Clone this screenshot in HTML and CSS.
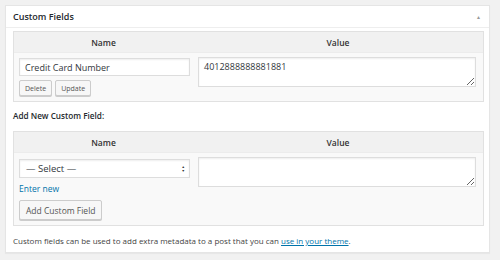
FILE: index.html
```html
<!DOCTYPE html>
<html lang="en">
<head>
    <meta charset="UTF-8">
    <title>Custom Fields</title>
    <link rel="stylesheet" href="styles.css">
</head>
<body>
    <div class="postbox">
        <div class="postbox-head">
            <h2>Custom Fields</h2>
            <span class="toggle">&#9650;</span>
        </div>
        <div class="inside">
            <table class="meta-table">
                <thead>
                    <tr>
                        <th class="col-name">Name</th>
                        <th>Value</th>
                    </tr>
                </thead>
                <tbody>
                    <tr>
                        <td class="col-name">
                            <input type="text" class="field" value="Credit Card Number">
                            <div class="actions">
                                <button class="btn btn-small">Delete</button>
                                <button class="btn btn-small">Update</button>
                            </div>
                        </td>
                        <td>
                            <textarea class="field area">4012888888881881</textarea>
                        </td>
                    </tr>
                </tbody>
            </table>

            <p class="add-title">Add New Custom Field:</p>

            <table class="meta-table">
                <thead>
                    <tr>
                        <th class="col-name">Name</th>
                        <th>Value</th>
                    </tr>
                </thead>
                <tbody>
                    <tr>
                        <td class="col-name">
                            <div class="select">
                                <span>&mdash; Select &mdash;</span>
                                <span class="arrows">&#9650;<br>&#9660;</span>
                            </div>
                            <a href="#" class="enter-new">Enter new</a>
                            <button class="btn">Add Custom Field</button>
                        </td>
                        <td>
                            <textarea class="field area"></textarea>
                        </td>
                    </tr>
                </tbody>
            </table>

            <p class="note">Custom fields can be used to add extra metadata to a post that you can <a href="#">use in your theme</a>.</p>
        </div>
    </div>
</body>
</html>
```

FILE: styles.css
```css
html, body {
    overflow: hidden;
}
body {
    margin: 0;
    padding: 5px 10px 7px 5px;
    background: #f1f1f1;
    font-family: "Open Sans", sans-serif;
    font-size: 8.5px;
    color: #444;
}
.postbox {
    background: #fff;
    border: 1px solid #e5e5e5;
    box-shadow: 0 1px 1px rgba(0, 0, 0, 0.04);
    height: 248px;
    box-sizing: border-box;
}
.postbox-head {
    display: flex;
    justify-content: space-between;
    align-items: center;
    height: 21px;
    padding: 0 8px 0 7px;
    border-bottom: 1px solid #eee;
}
.postbox-head h2 {
    margin: 0;
    font-size: 9px;
    font-weight: 600;
    color: #23282d;
}
.toggle {
    font-size: 5px;
    color: #999;
}
.inside {
    padding: 3px 5px 0 7px;
}
.meta-table {
    width: 100%;
    table-layout: fixed;
    border: 1px solid #e1e1e1;
    border-spacing: 0;
    background: #f9f9f9;
}
.meta-table th {
    background: #f1f1f1;
    font-weight: 600;
    font-size: 8.5px;
    color: #333;
    height: 20px;
    padding: 0;
    border-bottom: 1px solid #ececec;
}
.meta-table td {
    vertical-align: top;
    padding: 4px 7px 5px 5px;
}
.meta-table .col-name {
    width: 179px;
}
.meta-table td.col-name {
    padding: 5px 3px 5px 5px;
}
.field {
    display: block;
    box-sizing: border-box;
    width: 100%;
    border: 1px solid #ddd;
    box-shadow: inset 0 1px 2px rgba(0, 0, 0, 0.07);
    background: #fff;
    font-family: inherit;
    font-size: 9px;
    color: #32373c;
    height: 18px;
    padding: 0 5px;
    margin: 0;
}
.area {
    height: 30px;
    padding: 2px 5px;
    resize: vertical;
}
.actions {
    display: flex;
    gap: 3px;
    margin-top: 4px;
}
.btn {
    font-family: inherit;
    font-size: 8.5px;
    color: #555;
    background: #f7f7f7;
    border: 1px solid #ccc;
    border-radius: 2px;
    box-shadow: 0 1px 0 #ccc;
    height: 20px;
    padding: 0 6px;
    cursor: pointer;
}
.btn-small {
    font-size: 7px;
    height: 16px;
    padding: 0 5px;
}
.select {
    display: flex;
    justify-content: space-between;
    align-items: center;
    box-sizing: border-box;
    height: 19px;
    margin-top: 1px;
    background: #fff;
    border: 1px solid #ddd;
    box-shadow: inset 0 1px 2px rgba(0, 0, 0, 0.07);
    padding: 0 4px 0 6px;
    font-size: 9.5px;
    color: #32373c;
}
.arrows {
    font-size: 3.5px;
    line-height: 3.5px;
    color: #333;
    text-align: center;
}
.enter-new {
    display: block;
    color: #0073aa;
    text-decoration: none;
    margin: 5px 0 6px;
}
.add-title {
    margin: 8px 0 10px;
    font-weight: 600;
    font-size: 8.2px;
    color: #23282d;
}
.note {
    margin: 9px 0 0;
    font-size: 8px;
    color: #444;
}
.note a {
    color: #0073aa;
}
```
